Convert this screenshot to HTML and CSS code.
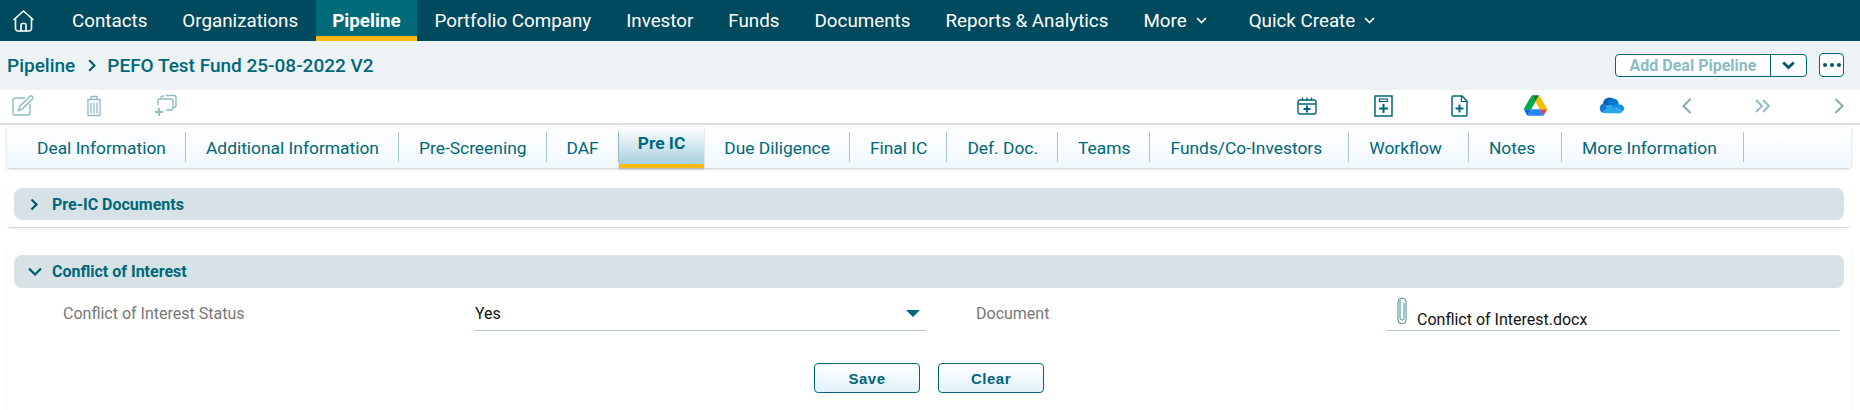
FILE: index.html
```html
<!DOCTYPE html>
<html lang="en">
<head>
<meta charset="utf-8">
<title>Pipeline</title>
<link rel="stylesheet" href="styles.css">
</head>
<body>
<nav class="nav">
  <a class="home"><svg width="21" height="22" viewBox="0 0 21 22" fill="none" stroke="#fff" stroke-width="1.6" stroke-linejoin="round" stroke-linecap="round"><path d="M1 9.5 10.5 1 20 9.5"/><path d="M2.5 8.5V18.5a2.5 2.5 0 0 0 2.5 2.5H16a2.5 2.5 0 0 0 2.5-2.5V8.5"/><path d="M8 21v-6a1.5 1.5 0 0 1 1.5-1.5h2A1.5 1.5 0 0 1 13 15v6"/></svg></a>
  <a class="nav-item">Contacts</a>
  <a class="nav-item">Organizations</a>
  <a class="nav-item active">Pipeline</a>
  <a class="nav-item">Portfolio Company</a>
  <a class="nav-item">Investor</a>
  <a class="nav-item">Funds</a>
  <a class="nav-item">Documents</a>
  <a class="nav-item">Reports &amp; Analytics</a>
  <a class="nav-item drop">More <svg width="11" height="7" viewBox="0 0 11 7" fill="none" stroke="#fff" stroke-width="1.7"><path d="M1 1l4.5 4.5L10 1"/></svg></a>
  <a class="nav-item drop quick">Quick Create <svg width="11" height="7" viewBox="0 0 11 7" fill="none" stroke="#fff" stroke-width="1.7"><path d="M1 1l4.5 4.5L10 1"/></svg></a>
</nav>

<header class="crumbs">
  <div class="crumb-text">
    <span>Pipeline</span>
    <svg class="crumb-sep" width="8" height="13" viewBox="0 0 8 13" fill="none" stroke="#00586c" stroke-width="2"><path d="M1.2 1.2 6.5 6.5 1.2 11.8"/></svg>
    <span>PEFO Test Fund 25-08-2022 V2</span>
  </div>
  <div class="crumb-actions">
    <div class="split">
      <span class="split-label">Add Deal Pipeline</span>
      <span class="split-caret"><svg width="13" height="9" viewBox="0 0 13 9" fill="none" stroke="#00586c" stroke-width="2.8"><path d="M1.2 1.5l5.3 5 5.3-5"/></svg></span>
    </div>
    <div class="more-btn"><i></i><i></i><i></i></div>
  </div>
</header>

<div class="toolbar">
  <div class="tool-group left">
    <span class="slot"><svg width="22" height="21" viewBox="0 0 22 21" fill="none" stroke="#8cbcc4" stroke-width="1.4"><path d="M13 3H3a2 2 0 0 0-2 2v13a2 2 0 0 0 2 2h13a2 2 0 0 0 2-2V9"/><path d="M6.5 15.5 8 11 18 1.5a1.6 1.6 0 0 1 2.5 2.3L10.5 13.8z"/></svg></span>
    <span class="slot"><svg width="16" height="22" viewBox="0 0 16 22" fill="none" stroke="#8cbcc4" stroke-width="1.3"><path d="M1 4.5h14M5 4V1.5h6V4M2 5v15.5h12V5M5 7.5v11M8 7.5v11M11 7.5v11"/></svg></span>
    <span class="slot"><svg width="23" height="23" viewBox="0 0 23 23" fill="none" stroke="#8cbcc4" stroke-width="1.4"><path d="M7 5V4a2 2 0 0 1 2-2h1"/><path d="M12 1.500h8a2 2 0 0 1 2 2v8a2 2 0 0 1-2 2h-1"/><path d="M4 11V7a2 2 0 0 1 2-2h11a2 2 0 0 1 2 2v7a2 2 0 0 1-2 2h-5"/><path d="M5 14v8M1 18h8" stroke-width="1.8"/></svg></span>
  </div>
  <div class="tool-group right">
    <span class="slot"><svg width="20" height="18" viewBox="0 0 20 18" fill="none" stroke="#00677a" stroke-width="1.4"><rect x="1" y="3" width="18" height="14" rx="2"/><path d="M1 7h18M5.5 0.5V4M10 0.5V4M14.500 0.500V4"/><path d="M10 8.500v7M6.500 12h7" stroke-width="1.900"/></svg></span>
    <span class="slot"><svg width="19" height="22" viewBox="0 0 19 22" fill="none" stroke="#00677a" stroke-width="1.500"><rect x="1" y="1" width="17" height="20"/><rect x="5.500" y="4" width="8" height="2.500" stroke-width="1.200"/><path d="M9.500 9v9M5 13.500h9" stroke-width="2"/></svg></span>
    <span class="slot"><svg width="17" height="22" viewBox="0 0 17 22" fill="none" stroke="#00677a" stroke-width="1.500"><path d="M11 1H2.500A1.500 1.500 0 0 0 1 2.500v17A1.500 1.500 0 0 0 2.500 21h12a1.500 1.500 0 0 0 1.500-1.500V6z"/><path d="M10.500 1v5.500H16" stroke-width="1.200"/><path d="M8.500 9.500v8M4.500 13.500h8" stroke-width="2"/></svg></span>
    <span class="slot"><svg width="23" height="21" viewBox="0 0 87.300 78"><path d="m6.600 66.850 3.850 6.650c.8 1.400 1.950 2.500 3.300 3.300l13.750-23.800h-27.500c0 1.550.4 3.100 1.200 4.500z" fill="#0066da"/><path d="m43.650 25-13.750-23.800c-1.350.8-2.500 1.900-3.300 3.300l-25.400 44a9.060 9.060 0 0 0 -1.200 4.500h27.500z" fill="#00ac47"/><path d="m73.550 76.800c1.350-.8 2.500-1.900 3.300-3.300l1.600-2.750 7.650-13.250c.8-1.400 1.200-2.950 1.200-4.500h-27.502l5.852 11.500z" fill="#ea4335"/><path d="m43.650 25 13.750-23.800c-1.350-.8-2.900-1.200-4.500-1.200h-18.500c-1.600 0-3.150.45-4.500 1.200z" fill="#00832d"/><path d="m59.800 53h-32.300l-13.750 23.800c1.350.8 2.900 1.200 4.500 1.200h50.800c1.600 0 3.150-.45 4.500-1.200z" fill="#2684fc"/><path d="m73.400 26.500-12.700-22c-.8-1.400-1.950-2.500-3.300-3.300l-13.750 23.800 16.150 28h27.450c0-1.550-.4-3.100-1.200-4.500z" fill="#ffba00"/></svg></span>
    <span class="slot"><svg width="26" height="17" viewBox="0 0 26 17"><path d="M5 7A6.500 6.500 0 0 1 17 3.500L10 9.500z" fill="#0364b8"/><path d="M9.500 4.800A6 6 0 0 1 20.800 7.600L15 12z" fill="#0078d4"/><path d="M5.500 6.500a5 5 0 0 0-1.500 9l7-4z" fill="#0f78d4"/><path d="M10 7.500l14.800 6.800A4 4 0 0 0 21 7.600a5 5 0 0 0-4.500.5z" fill="#1490df"/><path d="M4 15.500a5 5 0 0 0 2.500.8H21a4 4 0 0 0 3.800-2L11.500 8.500z" fill="#28a8ea"/></svg></span>
    <span class="slot"><svg width="10" height="16" viewBox="0 0 10 16" fill="none" stroke="#84a9b5" stroke-width="2"><path d="M8.500 1 1.500 8l7 7"/></svg></span>
    <span class="slot"><svg width="16" height="14" viewBox="0 0 16 14" fill="none" stroke="#8cbcc4" stroke-width="1.800"><path d="M1 1l6 6-6 6M8 1l6 6-6 6"/></svg></span>
    <span class="slot"><svg width="10" height="16" viewBox="0 0 10 16" fill="none" stroke="#84a9b5" stroke-width="2"><path d="M1.500 1l7 7-7 7"/></svg></span>
  </div>
</div>

<main class="content">
  <ul class="tabs">
    <li class="tab">Deal Information</li>
    <li class="tab">Additional Information</li>
    <li class="tab">Pre-Screening</li>
    <li class="tab">DAF</li>
    <li class="tab current">Pre IC</li>
    <li class="tab">Due Diligence</li>
    <li class="tab">Final IC</li>
    <li class="tab">Def. Doc.</li>
    <li class="tab">Teams</li>
    <li class="tab wide">Funds/Co-Investors</li>
    <li class="tab wide">Workflow</li>
    <li class="tab wide">Notes</li>
    <li class="tab wide">More Information</li>
  </ul>

  <section class="card collapsed">
    <h2 class="card-head">
      <svg class="head-icon" width="9" height="13" viewBox="0 0 9 13" fill="none" stroke="#00586c" stroke-width="2.2"><path d="M1.500 1.500l5 5-5 5"/></svg>
      Pre-IC Documents
    </h2>
  </section>

  <section class="card open">
    <h2 class="card-head">
      <svg class="head-icon" width="14" height="9" viewBox="0 0 14 9" fill="none" stroke="#00586c" stroke-width="2.2"><path d="M1 1.500l6 6 6-6"/></svg>
      Conflict of Interest
    </h2>
    <div class="form-row">
      <span class="label first">Conflict of Interest Status</span>
      <div class="field select"><span>Yes</span><i class="arrow"></i></div>
      <span class="label second">Document</span>
      <div class="field doc">
        <svg class="clip" width="10" height="27" viewBox="0 0 10 27" fill="none" stroke="#3f8f99" stroke-width="1"><path d="M7 6v15a2 2 0 0 1-4 0V4.500a3 3 0 0 1 0.500-1.500"/><path d="M1 5a4 4 0 0 1 8 0v18a4 4 0 0 1-8 0z"/></svg>
        <span>Conflict of Interest.docx</span>
      </div>
    </div>
    <div class="actions">
      <button class="btn">Save</button>
      <button class="btn">Clear</button>
    </div>
  </section>
</main>
</body>
</html>
```

FILE: styles.css
```css
* { box-sizing: border-box; }
html, body { margin: 0; padding: 0; }
body {
  width: 1860px;
  height: 410px;
  overflow: hidden;
  background: #fff;
  font-family: Roboto, "Liberation Sans", sans-serif;
  color: #00677a;
}

/* top navigation */
.nav {
  display: flex;
  align-items: stretch;
  height: 41px;
  background: #004a60;
  color: #fff;
  font-size: 18.8px;
}
.home { display: flex; align-items: center; padding: 0 20.5px 0 13px; }
.nav-item {
  display: flex;
  align-items: center;
  gap: 9px;
  padding: 0 17.5px;
  white-space: nowrap;
}
.nav-item.active {
  background: #006b78;
  border-bottom: 5px solid #fdb913;
  padding: 5px 16.5px 0;
  font-weight: 700;
}
.quick { margin-left: 7px; }

/* breadcrumb */
.crumbs {
  display: flex;
  justify-content: space-between;
  align-items: center;
  height: 49px;
  padding: 0 16px 1px 7px;
  background: #edf2f5;
}
.crumb-text {
  display: flex;
  align-items: center;
  font-size: 19px;
  font-weight: 500;
  color: #00677a;
}
.crumb-sep { margin: 1px 11px 0 13px; }
.crumb-actions { display: flex; align-items: center; gap: 12px; }
.split {
  display: flex;
  width: 192px;
  height: 23px;
  background: #fff;
  border: 1px solid #00677a;
  border-radius: 4px;
}
.split-label {
  width: 155px;
  border-right: 1px solid #00677a;
  text-align: center;
  font-size: 16px;
  font-weight: 700;
  line-height: 21px;
  color: #8bbcc4;
}
.split-caret { flex: 1; display: flex; align-items: center; justify-content: center; }
.more-btn {
  display: flex;
  align-items: center;
  justify-content: center;
  gap: 3px;
  width: 25px;
  height: 24px;
  border: 1px solid #00677a;
  border-radius: 4px;
  background: #fff;
}
.more-btn i { width: 4px; height: 4px; border-radius: 50%; background: #00586c; }

/* toolbar */
.toolbar {
  display: flex;
  justify-content: space-between;
  align-items: center;
  height: 35px;
  padding: 0 6px 2px 8px;
  background: #fff;
  border-bottom: 2px solid #dedede;
}
.tool-group { display: flex; align-items: center; }
.tool-group.left { gap: 41px; }
.tool-group.right { gap: 46px; }
.slot { display: flex; justify-content: center; align-items: center; width: 30px; height: 24px; }

/* tabs */
.content { padding: 2px 9px 0 7px; }
.tabs {
  display: flex;
  height: 41px;
  margin: 0;
  padding: 0 0 0 10px;
  list-style: none;
  background: linear-gradient(#fff, #f0f8fd);
  box-shadow: 0 1px 3px rgba(0, 0, 0, .22);
  border-radius: 0 0 3px 3px;
}
.tab {
  position: relative;
  display: flex;
  align-items: center;
  padding: 0 20px;
  font-size: 17.4px;
  color: #00677a;
  white-space: nowrap;
}
.tab.wide { padding-right: 27px; }
.tab::after {
  content: "";
  position: absolute;
  right: 0;
  top: 5px;
  height: 30px;
  width: 1px;
  background: #a9c4cd;
}
.tab.current {
  padding: 0 19px 5px;
  font-weight: 700;
  background: linear-gradient(#fff, #a8d0df);
  border-bottom: 4px solid #fdb913;
  box-shadow: 0 1px 2px rgba(0, 0, 0, .25);
}
.tab.current::after { display: none; }

/* panels */
.card {
  padding: 5px 7px 7px;
  background: #fff;
  border-radius: 0 0 4px 4px;
}
.card.collapsed {
  margin-top: 15px;
  box-shadow: 0 2px 2px -1px rgba(0, 0, 0, .22);
}
.card.open {
  margin-top: 23px;
  padding-bottom: 17px;
  border-radius: 0;
  box-shadow: -1px 0 0 #f4f4f4, 1px 0 0 #f4f4f4;
}
.card-head {
  display: flex;
  align-items: center;
  height: 32px;
  margin: 0;
  padding-left: 16px;
  background: #d7e2e7;
  border-radius: 8px;
  font-size: 16px;
  font-weight: 700;
  color: #00677a;
}
.head-icon { margin-right: 13px; }
.open .card-head { height: 33px; padding-left: 14px; }
.open .head-icon { margin-right: 10px; }

.form-row {
  display: flex;
  align-items: stretch;
  height: 43px;
  padding: 8px 0 0 49px;
  font-size: 16px;
}
.label { display: flex; align-items: center; padding-bottom: 1px; color: #777; white-space: nowrap; }
.label.first { width: 412px; }
.label.second { width: 411px; margin-left: 50px; }
.field { border-bottom: 1px solid #b2c4cb; color: #111; }
.select {
  display: flex;
  align-items: center;
  justify-content: space-between;
  width: 451px;
  padding: 0 6px 0 0;
}
.arrow {
  width: 0;
  height: 0;
  border-left: 7px solid transparent;
  border-right: 7px solid transparent;
  border-top: 7px solid #00677a;
}
.doc {
  display: flex;
  align-items: flex-end;
  width: 453px;
  height: 35px;
  padding: 0 0 0 10px;
}
.clip { flex: none; margin: 0 10px 6px 0; }
.doc span { line-height: 21px; }

.actions { display: flex; justify-content: center; gap: 18px; margin-top: 32px; }
.btn {
  width: 106px;
  height: 30px;
  padding: 0;
  border: 1px solid #00677a;
  border-radius: 4px;
  background: linear-gradient(#fff, #e2f2fb);
  color: #00677a;
  font-family: "Liberation Sans", Arial, sans-serif;
  font-size: 15px;
  font-weight: 700;
  letter-spacing: .5px;
}
```
